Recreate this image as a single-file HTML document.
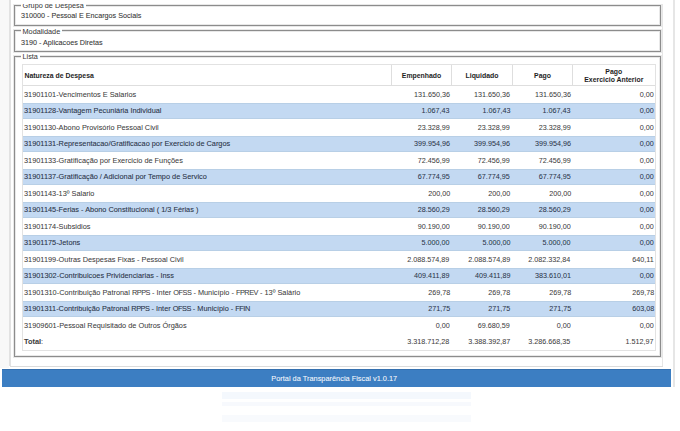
<!DOCTYPE html>
<html><head><meta charset="utf-8">
<style>
html,body{margin:0;padding:0;}
body{width:680px;height:431px;position:relative;overflow:hidden;background:#fff;font-family:"Liberation Sans",sans-serif;color:#333;}
.abs{position:absolute;}
.fs-text{position:absolute;font-size:7.6px;line-height:9px;white-space:nowrap;color:#363636;-webkit-text-stroke:0.15px rgba(50,50,50,0.5);transform:scaleX(0.947);transform-origin:0 50%;}
.legend{position:absolute;font-size:7.3px;line-height:9px;white-space:nowrap;color:#3a3a3a;-webkit-text-stroke:0.1px rgba(60,60,60,.4);background:linear-gradient(transparent 2px,#fff 2px,#fff 7px,transparent 7px);padding:0 1.8px 0 1.5px;}
.row{position:absolute;left:23px;width:632px;height:16px;}
.row.blue{background:#c3d9f2;box-shadow:inset 0 1px 0 rgba(140,160,180,.18), inset 0 -1px 0 rgba(140,160,180,.18);}
.t{position:absolute;font-size:7.6px;line-height:9px;white-space:nowrap;color:#3c3c3c;-webkit-text-stroke:0.12px rgba(60,60,60,0.45);transform:scaleX(0.947);transform-origin:0 50%;}
.t.n{transform-origin:100% 50%;transform:scaleX(0.947);-webkit-text-stroke:0.1px rgba(60,60,60,0.4);}
.t.d{transform:scaleX(0.968);}
.c{letter-spacing:-0.5px;}
.t.bt{color:#2a3448;-webkit-text-stroke:0.15px rgba(30,40,60,0.5);}
.t.n.bt{-webkit-text-stroke:0.1px rgba(30,40,60,0.4);}
.th{position:absolute;font-size:6.9px;font-weight:bold;line-height:8.6px;white-space:nowrap;color:#1e1e1e;text-align:center;}
</style></head><body><div id="root" style="position:absolute;left:0;top:0;width:680px;height:431px">
<!-- left page strip -->
<div class="abs" style="left:0;top:0;width:9px;height:368px;background:#f8f8f8"></div>
<!-- panel lines -->
<div class="abs" style="left:9px;top:0;width:2px;height:366px;background:#e2e2e2"></div>
<div class="abs" style="left:662px;top:0;width:1px;height:366px;background:#e6e6e6"></div>
<div class="abs" style="left:10px;top:365.5px;width:653px;height:1px;background:#dcdcdc"></div>
<div class="abs" style="left:673px;top:0;width:2px;height:387px;background:#e6e6e6"></div>

<!-- fieldset 1 -->
<div class="abs" style="left:14px;top:5px;width:647px;height:21px;border:1px solid #8c8c8c;box-sizing:border-box;box-shadow:0 0 0 1px rgba(140,140,140,.2), inset 0 0 0 1px rgba(140,140,140,.2)"></div>
<div class="legend" style="left:21px;top:0.8px">Grupo de Despesa</div>
<div class="abs" style="left:12px;top:0;width:660px;height:4.3px;background:#fff"></div>
<div class="fs-text" style="left:21.3px;top:11px">310000 - Pessoal E Encargos Sociais</div>
<!-- fieldset 2 -->
<div class="abs" style="left:14px;top:30px;width:647px;height:22px;border:1px solid #8c8c8c;box-sizing:border-box;box-shadow:0 0 0 1px rgba(140,140,140,.2), inset 0 0 0 1px rgba(140,140,140,.2)"></div>
<div class="legend" style="left:21px;top:26.5px">Modalidade</div>
<div class="fs-text" style="left:21.3px;top:37.7px">3190 - Aplicacoes Diretas</div>
<!-- fieldset 3 -->
<div class="abs" style="left:14px;top:56.4px;width:647px;height:300.6px;border:1px solid #8c8c8c;box-sizing:border-box;box-shadow:0 0 0 1px rgba(140,140,140,.2), inset 0 0 0 1px rgba(140,140,140,.2)"></div>
<div class="legend" style="left:21px;top:51.8px">Lista</div>

<!-- table -->
<div class="abs" style="left:22px;top:64px;width:634px;height:287px;border:1px solid #e2e2e2;box-sizing:border-box"></div>
<div class="abs" style="left:23px;top:85.3px;width:632px;height:1px;background:#dedede"></div>
<div class="abs" style="left:391px;top:64.5px;width:1px;height:21px;background:#dedede"></div>
<div class="abs" style="left:451px;top:64.5px;width:1px;height:21px;background:#dedede"></div>
<div class="abs" style="left:512px;top:64.5px;width:1px;height:21px;background:#dedede"></div>
<div class="abs" style="left:572px;top:64.5px;width:1px;height:21px;background:#dedede"></div>
<div class="th" style="left:24.5px;top:71.7px;text-align:left">Natureza de Despesa</div>
<div class="th" style="left:392px;width:59px;top:71.7px">Empenhado</div>
<div class="th" style="left:452px;width:60px;top:71.7px">Liquidado</div>
<div class="th" style="left:513px;width:59px;top:71.7px">Pago</div>
<div class="th" style="left:572.8px;width:82px;top:67.6px">Pago<br>Exercicio Anterior</div>

<div class="row" style="top:86.30px"></div>
<div class="t d" style="top:89.50px;left:24.2px">31901101-Vencimentos E Salarios</div>
<div class="t n" style="top:89.50px;right:230.20px">131.650,36</div>
<div class="t n" style="top:89.50px;right:169.80px">131.650,36</div>
<div class="t n" style="top:89.50px;right:109.20px">131.650,36</div>
<div class="t n" style="top:89.50px;right:26.00px">0,00</div>
<div class="row blue" style="top:102.80px"></div>
<div class="t d bt" style="top:106.00px;left:24.2px">31901128-Vantagem Pecuniária Individual</div>
<div class="t n bt" style="top:106.00px;right:230.20px">1.067,43</div>
<div class="t n bt" style="top:106.00px;right:169.80px">1.067,43</div>
<div class="t n bt" style="top:106.00px;right:109.20px">1.067,43</div>
<div class="t n bt" style="top:106.00px;right:26.00px">0,00</div>
<div class="row" style="top:119.30px"></div>
<div class="t d" style="top:122.50px;left:24.2px">31901130-Abono Provisório Pessoal Civil</div>
<div class="t n" style="top:122.50px;right:230.20px">23.328,99</div>
<div class="t n" style="top:122.50px;right:169.80px">23.328,99</div>
<div class="t n" style="top:122.50px;right:109.20px">23.328,99</div>
<div class="t n" style="top:122.50px;right:26.00px">0,00</div>
<div class="row blue" style="top:135.80px"></div>
<div class="t d bt" style="top:139.00px;left:24.2px">31901131-Representacao/Gratificacao por Exercicio de Cargos</div>
<div class="t n bt" style="top:139.00px;right:230.20px">399.954,96</div>
<div class="t n bt" style="top:139.00px;right:169.80px">399.954,96</div>
<div class="t n bt" style="top:139.00px;right:109.20px">399.954,96</div>
<div class="t n bt" style="top:139.00px;right:26.00px">0,00</div>
<div class="row" style="top:152.30px"></div>
<div class="t d" style="top:155.50px;left:24.2px">31901133-Gratificação por Exercicio de Funções</div>
<div class="t n" style="top:155.50px;right:230.20px">72.456,99</div>
<div class="t n" style="top:155.50px;right:169.80px">72.456,99</div>
<div class="t n" style="top:155.50px;right:109.20px">72.456,99</div>
<div class="t n" style="top:155.50px;right:26.00px">0,00</div>
<div class="row blue" style="top:168.80px"></div>
<div class="t d bt" style="top:172.00px;left:24.2px">31901137-Gratificação / Adicional por Tempo de Servico</div>
<div class="t n bt" style="top:172.00px;right:230.20px">67.774,95</div>
<div class="t n bt" style="top:172.00px;right:169.80px">67.774,95</div>
<div class="t n bt" style="top:172.00px;right:109.20px">67.774,95</div>
<div class="t n bt" style="top:172.00px;right:26.00px">0,00</div>
<div class="row" style="top:185.30px"></div>
<div class="t d" style="top:188.50px;left:24.2px">31901143-13º Salario</div>
<div class="t n" style="top:188.50px;right:230.20px">200,00</div>
<div class="t n" style="top:188.50px;right:169.80px">200,00</div>
<div class="t n" style="top:188.50px;right:109.20px">200,00</div>
<div class="t n" style="top:188.50px;right:26.00px">0,00</div>
<div class="row blue" style="top:201.80px"></div>
<div class="t d bt" style="top:205.00px;left:24.2px">31901145-Ferias - Abono Constitucional ( 1/3 Férias )</div>
<div class="t n bt" style="top:205.00px;right:230.20px">28.560,29</div>
<div class="t n bt" style="top:205.00px;right:169.80px">28.560,29</div>
<div class="t n bt" style="top:205.00px;right:109.20px">28.560,29</div>
<div class="t n bt" style="top:205.00px;right:26.00px">0,00</div>
<div class="row" style="top:218.30px"></div>
<div class="t d" style="top:221.50px;left:24.2px">31901174-Subsidios</div>
<div class="t n" style="top:221.50px;right:230.20px">90.190,00</div>
<div class="t n" style="top:221.50px;right:169.80px">90.190,00</div>
<div class="t n" style="top:221.50px;right:109.20px">90.190,00</div>
<div class="t n" style="top:221.50px;right:26.00px">0,00</div>
<div class="row blue" style="top:234.80px"></div>
<div class="t d bt" style="top:238.00px;left:24.2px">31901175-Jetons</div>
<div class="t n bt" style="top:238.00px;right:230.20px">5.000,00</div>
<div class="t n bt" style="top:238.00px;right:169.80px">5.000,00</div>
<div class="t n bt" style="top:238.00px;right:109.20px">5.000,00</div>
<div class="t n bt" style="top:238.00px;right:26.00px">0,00</div>
<div class="row" style="top:251.30px"></div>
<div class="t d" style="top:254.50px;left:24.2px">31901199-Outras Despesas Fixas - Pessoal Civil</div>
<div class="t n" style="top:254.50px;right:230.20px">2.088.574,89</div>
<div class="t n" style="top:254.50px;right:169.80px">2.088.574,89</div>
<div class="t n" style="top:254.50px;right:109.20px">2.082.332,84</div>
<div class="t n" style="top:254.50px;right:26.00px">640,11</div>
<div class="row blue" style="top:267.80px"></div>
<div class="t d bt" style="top:271.00px;left:24.2px">31901302-Contribuicoes Prividenciarias - Inss</div>
<div class="t n bt" style="top:271.00px;right:230.20px">409.411,89</div>
<div class="t n bt" style="top:271.00px;right:169.80px">409.411,89</div>
<div class="t n bt" style="top:271.00px;right:109.20px">383.610,01</div>
<div class="t n bt" style="top:271.00px;right:26.00px">0,00</div>
<div class="row" style="top:284.30px"></div>
<div class="t d" style="top:287.50px;left:24.2px">31901310-Contribuição Patronal <span class=c>RPPS</span> - Inter <span class=c>OFSS</span> - Município - <span class=c>FPREV</span> - 13º Salário</div>
<div class="t n" style="top:287.50px;right:230.20px">269,78</div>
<div class="t n" style="top:287.50px;right:169.80px">269,78</div>
<div class="t n" style="top:287.50px;right:109.20px">269,78</div>
<div class="t n" style="top:287.50px;right:26.00px">269,78</div>
<div class="row blue" style="top:300.80px"></div>
<div class="t d bt" style="top:304.00px;left:24.2px">31901311-Contribuição Patronal <span class=c>RPPS</span> - Inter <span class=c>OFSS</span> - Município - <span class=c>FFIN</span></div>
<div class="t n bt" style="top:304.00px;right:230.20px">271,75</div>
<div class="t n bt" style="top:304.00px;right:169.80px">271,75</div>
<div class="t n bt" style="top:304.00px;right:109.20px">271,75</div>
<div class="t n bt" style="top:304.00px;right:26.00px">603,08</div>
<div class="row" style="top:317.30px"></div>
<div class="t d" style="top:320.50px;left:24.2px">31909601-Pessoal Requisitado de Outros Órgãos</div>
<div class="t n" style="top:320.50px;right:230.20px">0,00</div>
<div class="t n" style="top:320.50px;right:169.80px">69.680,59</div>
<div class="t n" style="top:320.50px;right:109.20px">0,00</div>
<div class="t n" style="top:320.50px;right:26.00px">0,00</div>
<div class="row" style="top:333.80px"></div>
<div class="t d" style="top:337.00px;left:24.2px"><b>Total</b>:</div>
<div class="t n" style="top:337.00px;right:230.20px">3.318.712,28</div>
<div class="t n" style="top:337.00px;right:169.80px">3.388.392,87</div>
<div class="t n" style="top:337.00px;right:109.20px">3.286.668,35</div>
<div class="t n" style="top:337.00px;right:26.00px">1.512,97</div>

<!-- footer -->
<div class="abs" style="left:2px;top:369.4px;width:668.5px;height:17.2px;background:#3c7ec2;box-shadow:inset 0 1px 0 rgba(30,70,120,.25)"></div>
<div class="abs" style="left:2px;top:374.4px;width:668.5px;height:9px;line-height:9px;text-align:center;font-size:7.7px;color:#f4f8fc;-webkit-text-stroke:0.15px rgba(240,245,255,.5);white-space:nowrap;transform:scaleX(0.96);transform-origin:334.6px 50%;margin-left:-1.8px">Portal da Transparência Fiscal v1.0.17</div>

<!-- faint ghost bars below -->
<div class="abs" style="left:222px;top:392px;width:249px;height:7px;background:#f4f8fd"></div>
<div class="abs" style="left:222px;top:402px;width:249px;height:4px;background:#f7f9fd"></div>
<div class="abs" style="left:222px;top:415px;width:249px;height:7px;background:#f8fafd"></div>
</div></body></html>
